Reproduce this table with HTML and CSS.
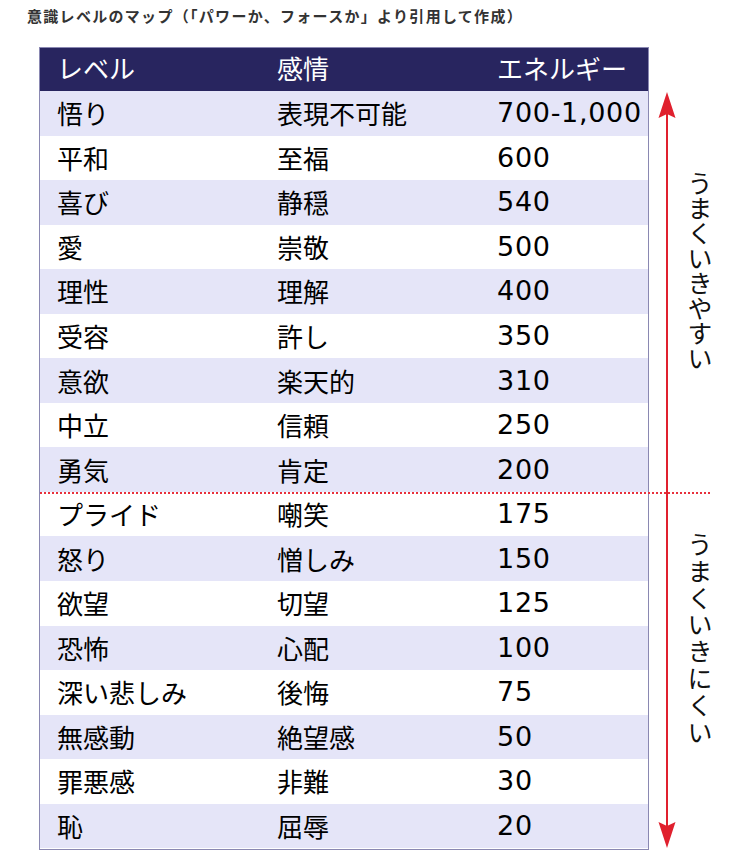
FILE: index.html
```html
<!DOCTYPE html>
<html lang="ja">
<head>
<meta charset="utf-8">
<title>意識レベルのマップ</title>
<link rel="stylesheet" href="styles.css">
</head>
<body>
<div class="page">
  <h1 class="title">意識レベルのマップ（「パワーか、フォースか」より引用して作成）</h1>
  <div class="main">
    <div class="table">
      <div class="row head"><div class="c1">レベル</div><div class="c2">感情</div><div class="c3">エネルギー</div></div>
      <div class="row alt"><div class="c1">悟り</div><div class="c2">表現不可能</div><div class="c3 num">700-1,000</div></div>
      <div class="row"><div class="c1">平和</div><div class="c2">至福</div><div class="c3 num">600</div></div>
      <div class="row alt"><div class="c1">喜び</div><div class="c2">静穏</div><div class="c3 num">540</div></div>
      <div class="row"><div class="c1">愛</div><div class="c2">崇敬</div><div class="c3 num">500</div></div>
      <div class="row alt"><div class="c1">理性</div><div class="c2">理解</div><div class="c3 num">400</div></div>
      <div class="row"><div class="c1">受容</div><div class="c2">許し</div><div class="c3 num">350</div></div>
      <div class="row alt"><div class="c1">意欲</div><div class="c2">楽天的</div><div class="c3 num">310</div></div>
      <div class="row"><div class="c1">中立</div><div class="c2">信頼</div><div class="c3 num">250</div></div>
      <div class="row alt"><div class="c1">勇気</div><div class="c2">肯定</div><div class="c3 num">200</div></div>
      <div class="row"><div class="c1">プライド</div><div class="c2">嘲笑</div><div class="c3 num">175</div></div>
      <div class="row alt"><div class="c1">怒り</div><div class="c2">憎しみ</div><div class="c3 num">150</div></div>
      <div class="row"><div class="c1">欲望</div><div class="c2">切望</div><div class="c3 num">125</div></div>
      <div class="row alt"><div class="c1">恐怖</div><div class="c2">心配</div><div class="c3 num">100</div></div>
      <div class="row"><div class="c1">深い悲しみ</div><div class="c2">後悔</div><div class="c3 num">75</div></div>
      <div class="row alt"><div class="c1">無感動</div><div class="c2">絶望感</div><div class="c3 num">50</div></div>
      <div class="row"><div class="c1">罪悪感</div><div class="c2">非難</div><div class="c3 num">30</div></div>
      <div class="row alt"><div class="c1">恥</div><div class="c2">屈辱</div><div class="c3 num">20</div></div>
    </div>
    <div class="side">
      <svg class="arrow" width="36" height="758" viewBox="0 0 36 758" aria-hidden="true">
        <line x1="18" y1="18" x2="18" y2="740" stroke="#e0202e" stroke-width="2"/>
        <path d="M18 0 L26.5 26 L18 22 L9.5 26 Z" fill="#e0202e"/>
        <path d="M18 756 L26.5 730 L18 734 L9.5 730 Z" fill="#e0202e"/>
      </svg>
      <div class="labels">
        <div class="vlabel up">うまくいきやすい</div>
        <div class="vlabel down">うまくいきにくい</div>
      </div>
    </div>
    <div class="divider"></div>
  </div>
</div>
</body>
</html>
```

FILE: styles.css
```css
html, body {
  margin: 0;
  padding: 0;
  background: #ffffff;
}

.page {
  width: 732px;
  font-family: "Noto Sans CJK JP", "Noto Sans", sans-serif;
  color: #000;
}

.title {
  margin: 0;
  padding: 6px 0 0 27px;
  font-size: 15px;
  line-height: 20px;
  font-weight: 700;
  color: #333333;
  letter-spacing: 1.3px;
}

.main {
  position: relative;
  display: flex;
  margin-top: 21px;
  padding-left: 39px;
}

.table {
  width: 608px;
  border: 1px solid #8a88b2;
  display: flex;
  flex-direction: column;
}

.row {
  display: grid;
  grid-template-columns: 220px 220px 168px;
  height: 44.55px;
  align-items: center;
  font-size: 26px;
  line-height: 30px;
  background: #ffffff;
}

.row.head {
  height: 43px;
  background: #28255f;
  color: #ffffff;
  padding-bottom: 3px;
  box-sizing: border-box;
}

.row.alt {
  background: #e5e5f8;
}

.c1, .c2, .c3 {
  padding-left: 17px;
  white-space: nowrap;
}

.num {
  font-family: "DejaVu Sans", sans-serif;
  font-size: 27px;
  letter-spacing: 0.7px;
}

.side {
  display: flex;
}

.arrow {
  display: block;
  margin-top: 45px;
}

.labels {
  width: 30px;
  display: flex;
  flex-direction: column;
  align-items: center;
}

.vlabel {
  writing-mode: vertical-rl;
  font-size: 25px;
  line-height: 30px;
  color: #111;
}

.vlabel.up {
  margin-top: 124px;
}

.vlabel.down {
  margin-top: 161px;
  letter-spacing: 1.8px;
}

.divider {
  position: absolute;
  top: 445px;
  left: 40px;
  width: 670px;
  border-top: 2px dotted #e8303c;
}
```
